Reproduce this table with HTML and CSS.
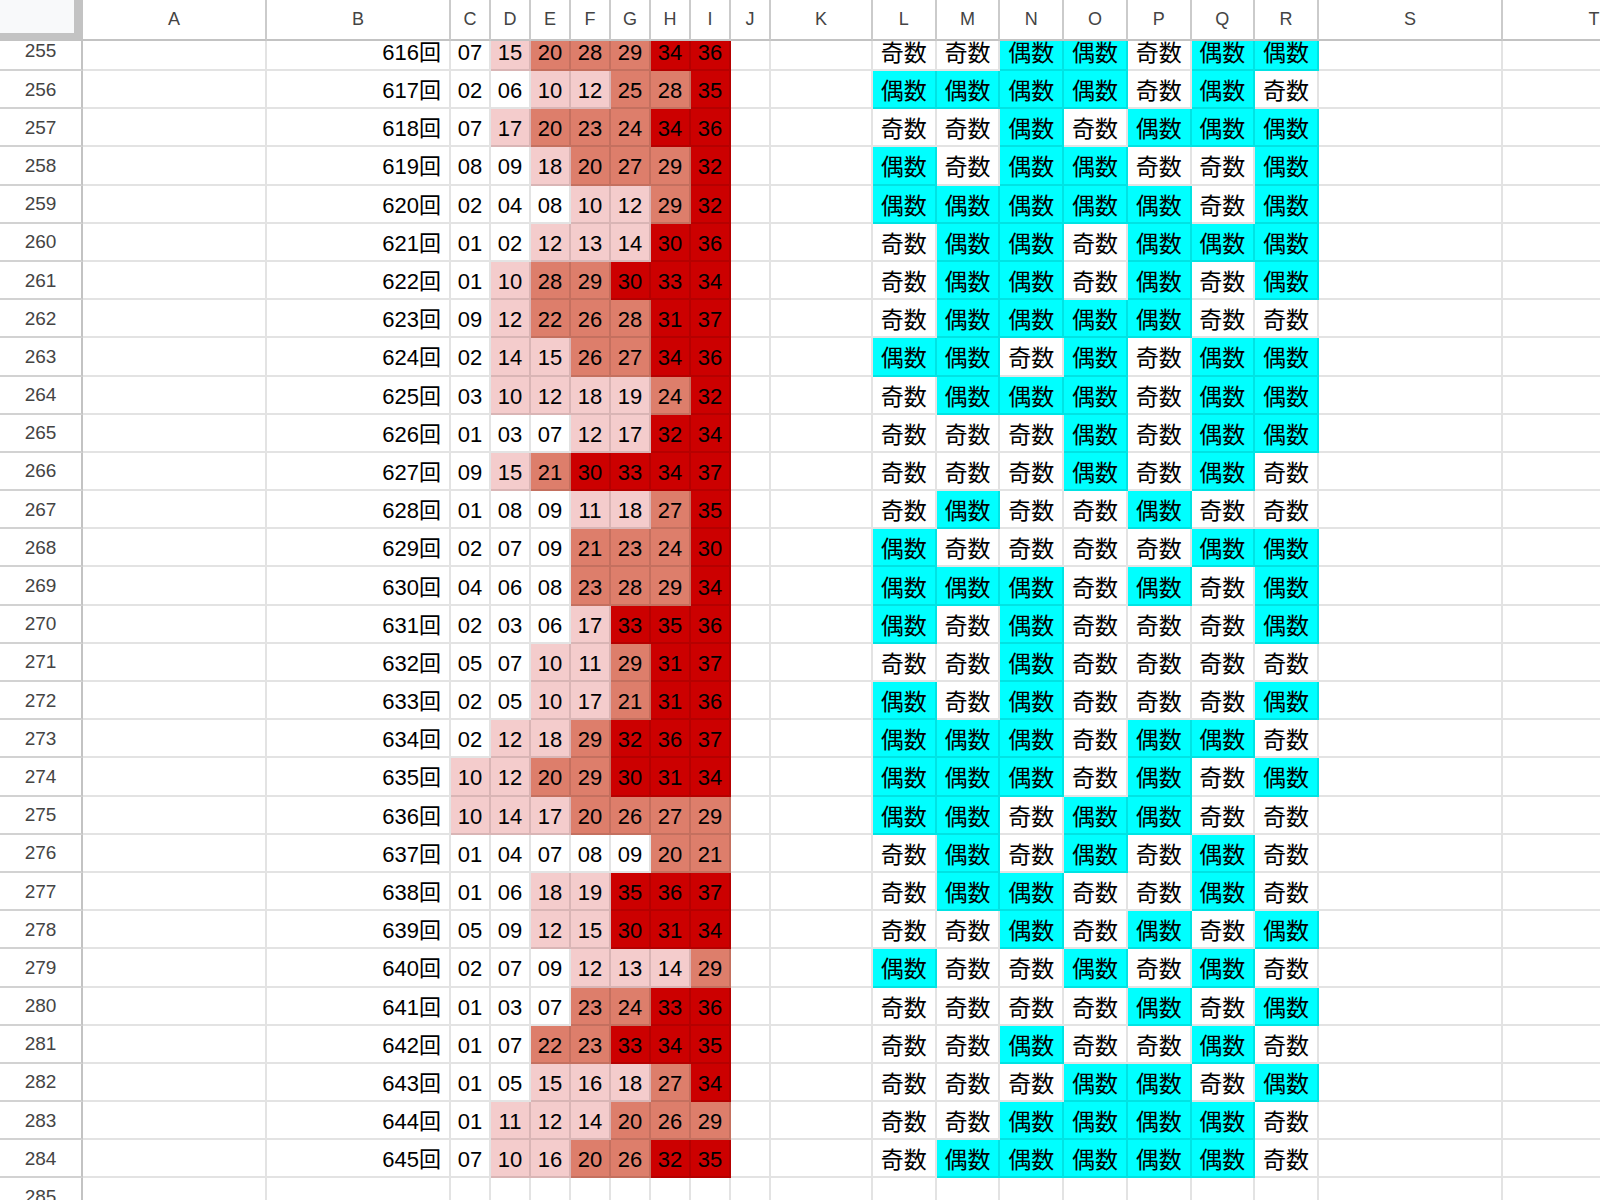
FILE: index.html
```html
<!DOCTYPE html>
<html lang="ja">
<head>
<meta charset="utf-8">
<title>Sheet</title>
<link rel="stylesheet" href="styles.css">
</head>
<body>
<div class="sheet">
  <div class="cols head">
    <div class="corner"></div>
    <div class="hc">A</div><div class="hc">B</div><div class="hc">C</div><div class="hc">D</div><div class="hc">E</div><div class="hc">F</div><div class="hc">G</div><div class="hc">H</div><div class="hc">I</div><div class="hc">J</div><div class="hc">K</div><div class="hc">L</div><div class="hc">M</div><div class="hc">N</div><div class="hc">O</div><div class="hc">P</div><div class="hc">Q</div><div class="hc">R</div><div class="hc">S</div><div class="hc">T</div>
  </div>
  <div class="viewport">
    <div class="rows">
      <div class="cols row"><div class="rh">255</div><div class="c"></div><div class="c no">616回</div><div class="c b0">07</div><div class="c b1">15</div><div class="c b2">20</div><div class="c b2">28</div><div class="c b2">29</div><div class="c b3">34</div><div class="c b3">36</div><div class="c"></div><div class="c"></div><div class="c od">奇数</div><div class="c od">奇数</div><div class="c ev">偶数</div><div class="c ev">偶数</div><div class="c od">奇数</div><div class="c ev">偶数</div><div class="c ev">偶数</div><div class="c"></div><div class="c"></div></div>
      <div class="cols row"><div class="rh">256</div><div class="c"></div><div class="c no">617回</div><div class="c b0">02</div><div class="c b0">06</div><div class="c b1">10</div><div class="c b1">12</div><div class="c b2">25</div><div class="c b2">28</div><div class="c b3">35</div><div class="c"></div><div class="c"></div><div class="c ev">偶数</div><div class="c ev">偶数</div><div class="c ev">偶数</div><div class="c ev">偶数</div><div class="c od">奇数</div><div class="c ev">偶数</div><div class="c od">奇数</div><div class="c"></div><div class="c"></div></div>
      <div class="cols row"><div class="rh">257</div><div class="c"></div><div class="c no">618回</div><div class="c b0">07</div><div class="c b1">17</div><div class="c b2">20</div><div class="c b2">23</div><div class="c b2">24</div><div class="c b3">34</div><div class="c b3">36</div><div class="c"></div><div class="c"></div><div class="c od">奇数</div><div class="c od">奇数</div><div class="c ev">偶数</div><div class="c od">奇数</div><div class="c ev">偶数</div><div class="c ev">偶数</div><div class="c ev">偶数</div><div class="c"></div><div class="c"></div></div>
      <div class="cols row"><div class="rh">258</div><div class="c"></div><div class="c no">619回</div><div class="c b0">08</div><div class="c b0">09</div><div class="c b1">18</div><div class="c b2">20</div><div class="c b2">27</div><div class="c b2">29</div><div class="c b3">32</div><div class="c"></div><div class="c"></div><div class="c ev">偶数</div><div class="c od">奇数</div><div class="c ev">偶数</div><div class="c ev">偶数</div><div class="c od">奇数</div><div class="c od">奇数</div><div class="c ev">偶数</div><div class="c"></div><div class="c"></div></div>
      <div class="cols row"><div class="rh">259</div><div class="c"></div><div class="c no">620回</div><div class="c b0">02</div><div class="c b0">04</div><div class="c b0">08</div><div class="c b1">10</div><div class="c b1">12</div><div class="c b2">29</div><div class="c b3">32</div><div class="c"></div><div class="c"></div><div class="c ev">偶数</div><div class="c ev">偶数</div><div class="c ev">偶数</div><div class="c ev">偶数</div><div class="c ev">偶数</div><div class="c od">奇数</div><div class="c ev">偶数</div><div class="c"></div><div class="c"></div></div>
      <div class="cols row"><div class="rh">260</div><div class="c"></div><div class="c no">621回</div><div class="c b0">01</div><div class="c b0">02</div><div class="c b1">12</div><div class="c b1">13</div><div class="c b1">14</div><div class="c b3">30</div><div class="c b3">36</div><div class="c"></div><div class="c"></div><div class="c od">奇数</div><div class="c ev">偶数</div><div class="c ev">偶数</div><div class="c od">奇数</div><div class="c ev">偶数</div><div class="c ev">偶数</div><div class="c ev">偶数</div><div class="c"></div><div class="c"></div></div>
      <div class="cols row"><div class="rh">261</div><div class="c"></div><div class="c no">622回</div><div class="c b0">01</div><div class="c b1">10</div><div class="c b2">28</div><div class="c b2">29</div><div class="c b3">30</div><div class="c b3">33</div><div class="c b3">34</div><div class="c"></div><div class="c"></div><div class="c od">奇数</div><div class="c ev">偶数</div><div class="c ev">偶数</div><div class="c od">奇数</div><div class="c ev">偶数</div><div class="c od">奇数</div><div class="c ev">偶数</div><div class="c"></div><div class="c"></div></div>
      <div class="cols row"><div class="rh">262</div><div class="c"></div><div class="c no">623回</div><div class="c b0">09</div><div class="c b1">12</div><div class="c b2">22</div><div class="c b2">26</div><div class="c b2">28</div><div class="c b3">31</div><div class="c b3">37</div><div class="c"></div><div class="c"></div><div class="c od">奇数</div><div class="c ev">偶数</div><div class="c ev">偶数</div><div class="c ev">偶数</div><div class="c ev">偶数</div><div class="c od">奇数</div><div class="c od">奇数</div><div class="c"></div><div class="c"></div></div>
      <div class="cols row"><div class="rh">263</div><div class="c"></div><div class="c no">624回</div><div class="c b0">02</div><div class="c b1">14</div><div class="c b1">15</div><div class="c b2">26</div><div class="c b2">27</div><div class="c b3">34</div><div class="c b3">36</div><div class="c"></div><div class="c"></div><div class="c ev">偶数</div><div class="c ev">偶数</div><div class="c od">奇数</div><div class="c ev">偶数</div><div class="c od">奇数</div><div class="c ev">偶数</div><div class="c ev">偶数</div><div class="c"></div><div class="c"></div></div>
      <div class="cols row"><div class="rh">264</div><div class="c"></div><div class="c no">625回</div><div class="c b0">03</div><div class="c b1">10</div><div class="c b1">12</div><div class="c b1">18</div><div class="c b1">19</div><div class="c b2">24</div><div class="c b3">32</div><div class="c"></div><div class="c"></div><div class="c od">奇数</div><div class="c ev">偶数</div><div class="c ev">偶数</div><div class="c ev">偶数</div><div class="c od">奇数</div><div class="c ev">偶数</div><div class="c ev">偶数</div><div class="c"></div><div class="c"></div></div>
      <div class="cols row"><div class="rh">265</div><div class="c"></div><div class="c no">626回</div><div class="c b0">01</div><div class="c b0">03</div><div class="c b0">07</div><div class="c b1">12</div><div class="c b1">17</div><div class="c b3">32</div><div class="c b3">34</div><div class="c"></div><div class="c"></div><div class="c od">奇数</div><div class="c od">奇数</div><div class="c od">奇数</div><div class="c ev">偶数</div><div class="c od">奇数</div><div class="c ev">偶数</div><div class="c ev">偶数</div><div class="c"></div><div class="c"></div></div>
      <div class="cols row"><div class="rh">266</div><div class="c"></div><div class="c no">627回</div><div class="c b0">09</div><div class="c b1">15</div><div class="c b2">21</div><div class="c b3">30</div><div class="c b3">33</div><div class="c b3">34</div><div class="c b3">37</div><div class="c"></div><div class="c"></div><div class="c od">奇数</div><div class="c od">奇数</div><div class="c od">奇数</div><div class="c ev">偶数</div><div class="c od">奇数</div><div class="c ev">偶数</div><div class="c od">奇数</div><div class="c"></div><div class="c"></div></div>
      <div class="cols row"><div class="rh">267</div><div class="c"></div><div class="c no">628回</div><div class="c b0">01</div><div class="c b0">08</div><div class="c b0">09</div><div class="c b1">11</div><div class="c b1">18</div><div class="c b2">27</div><div class="c b3">35</div><div class="c"></div><div class="c"></div><div class="c od">奇数</div><div class="c ev">偶数</div><div class="c od">奇数</div><div class="c od">奇数</div><div class="c ev">偶数</div><div class="c od">奇数</div><div class="c od">奇数</div><div class="c"></div><div class="c"></div></div>
      <div class="cols row"><div class="rh">268</div><div class="c"></div><div class="c no">629回</div><div class="c b0">02</div><div class="c b0">07</div><div class="c b0">09</div><div class="c b2">21</div><div class="c b2">23</div><div class="c b2">24</div><div class="c b3">30</div><div class="c"></div><div class="c"></div><div class="c ev">偶数</div><div class="c od">奇数</div><div class="c od">奇数</div><div class="c od">奇数</div><div class="c od">奇数</div><div class="c ev">偶数</div><div class="c ev">偶数</div><div class="c"></div><div class="c"></div></div>
      <div class="cols row"><div class="rh">269</div><div class="c"></div><div class="c no">630回</div><div class="c b0">04</div><div class="c b0">06</div><div class="c b0">08</div><div class="c b2">23</div><div class="c b2">28</div><div class="c b2">29</div><div class="c b3">34</div><div class="c"></div><div class="c"></div><div class="c ev">偶数</div><div class="c ev">偶数</div><div class="c ev">偶数</div><div class="c od">奇数</div><div class="c ev">偶数</div><div class="c od">奇数</div><div class="c ev">偶数</div><div class="c"></div><div class="c"></div></div>
      <div class="cols row"><div class="rh">270</div><div class="c"></div><div class="c no">631回</div><div class="c b0">02</div><div class="c b0">03</div><div class="c b0">06</div><div class="c b1">17</div><div class="c b3">33</div><div class="c b3">35</div><div class="c b3">36</div><div class="c"></div><div class="c"></div><div class="c ev">偶数</div><div class="c od">奇数</div><div class="c ev">偶数</div><div class="c od">奇数</div><div class="c od">奇数</div><div class="c od">奇数</div><div class="c ev">偶数</div><div class="c"></div><div class="c"></div></div>
      <div class="cols row"><div class="rh">271</div><div class="c"></div><div class="c no">632回</div><div class="c b0">05</div><div class="c b0">07</div><div class="c b1">10</div><div class="c b1">11</div><div class="c b2">29</div><div class="c b3">31</div><div class="c b3">37</div><div class="c"></div><div class="c"></div><div class="c od">奇数</div><div class="c od">奇数</div><div class="c ev">偶数</div><div class="c od">奇数</div><div class="c od">奇数</div><div class="c od">奇数</div><div class="c od">奇数</div><div class="c"></div><div class="c"></div></div>
      <div class="cols row"><div class="rh">272</div><div class="c"></div><div class="c no">633回</div><div class="c b0">02</div><div class="c b0">05</div><div class="c b1">10</div><div class="c b1">17</div><div class="c b2">21</div><div class="c b3">31</div><div class="c b3">36</div><div class="c"></div><div class="c"></div><div class="c ev">偶数</div><div class="c od">奇数</div><div class="c ev">偶数</div><div class="c od">奇数</div><div class="c od">奇数</div><div class="c od">奇数</div><div class="c ev">偶数</div><div class="c"></div><div class="c"></div></div>
      <div class="cols row"><div class="rh">273</div><div class="c"></div><div class="c no">634回</div><div class="c b0">02</div><div class="c b1">12</div><div class="c b1">18</div><div class="c b2">29</div><div class="c b3">32</div><div class="c b3">36</div><div class="c b3">37</div><div class="c"></div><div class="c"></div><div class="c ev">偶数</div><div class="c ev">偶数</div><div class="c ev">偶数</div><div class="c od">奇数</div><div class="c ev">偶数</div><div class="c ev">偶数</div><div class="c od">奇数</div><div class="c"></div><div class="c"></div></div>
      <div class="cols row"><div class="rh">274</div><div class="c"></div><div class="c no">635回</div><div class="c b1">10</div><div class="c b1">12</div><div class="c b2">20</div><div class="c b2">29</div><div class="c b3">30</div><div class="c b3">31</div><div class="c b3">34</div><div class="c"></div><div class="c"></div><div class="c ev">偶数</div><div class="c ev">偶数</div><div class="c ev">偶数</div><div class="c od">奇数</div><div class="c ev">偶数</div><div class="c od">奇数</div><div class="c ev">偶数</div><div class="c"></div><div class="c"></div></div>
      <div class="cols row"><div class="rh">275</div><div class="c"></div><div class="c no">636回</div><div class="c b1">10</div><div class="c b1">14</div><div class="c b1">17</div><div class="c b2">20</div><div class="c b2">26</div><div class="c b2">27</div><div class="c b2">29</div><div class="c"></div><div class="c"></div><div class="c ev">偶数</div><div class="c ev">偶数</div><div class="c od">奇数</div><div class="c ev">偶数</div><div class="c ev">偶数</div><div class="c od">奇数</div><div class="c od">奇数</div><div class="c"></div><div class="c"></div></div>
      <div class="cols row"><div class="rh">276</div><div class="c"></div><div class="c no">637回</div><div class="c b0">01</div><div class="c b0">04</div><div class="c b0">07</div><div class="c b0">08</div><div class="c b0">09</div><div class="c b2">20</div><div class="c b2">21</div><div class="c"></div><div class="c"></div><div class="c od">奇数</div><div class="c ev">偶数</div><div class="c od">奇数</div><div class="c ev">偶数</div><div class="c od">奇数</div><div class="c ev">偶数</div><div class="c od">奇数</div><div class="c"></div><div class="c"></div></div>
      <div class="cols row"><div class="rh">277</div><div class="c"></div><div class="c no">638回</div><div class="c b0">01</div><div class="c b0">06</div><div class="c b1">18</div><div class="c b1">19</div><div class="c b3">35</div><div class="c b3">36</div><div class="c b3">37</div><div class="c"></div><div class="c"></div><div class="c od">奇数</div><div class="c ev">偶数</div><div class="c ev">偶数</div><div class="c od">奇数</div><div class="c od">奇数</div><div class="c ev">偶数</div><div class="c od">奇数</div><div class="c"></div><div class="c"></div></div>
      <div class="cols row"><div class="rh">278</div><div class="c"></div><div class="c no">639回</div><div class="c b0">05</div><div class="c b0">09</div><div class="c b1">12</div><div class="c b1">15</div><div class="c b3">30</div><div class="c b3">31</div><div class="c b3">34</div><div class="c"></div><div class="c"></div><div class="c od">奇数</div><div class="c od">奇数</div><div class="c ev">偶数</div><div class="c od">奇数</div><div class="c ev">偶数</div><div class="c od">奇数</div><div class="c ev">偶数</div><div class="c"></div><div class="c"></div></div>
      <div class="cols row"><div class="rh">279</div><div class="c"></div><div class="c no">640回</div><div class="c b0">02</div><div class="c b0">07</div><div class="c b0">09</div><div class="c b1">12</div><div class="c b1">13</div><div class="c b1">14</div><div class="c b2">29</div><div class="c"></div><div class="c"></div><div class="c ev">偶数</div><div class="c od">奇数</div><div class="c od">奇数</div><div class="c ev">偶数</div><div class="c od">奇数</div><div class="c ev">偶数</div><div class="c od">奇数</div><div class="c"></div><div class="c"></div></div>
      <div class="cols row"><div class="rh">280</div><div class="c"></div><div class="c no">641回</div><div class="c b0">01</div><div class="c b0">03</div><div class="c b0">07</div><div class="c b2">23</div><div class="c b2">24</div><div class="c b3">33</div><div class="c b3">36</div><div class="c"></div><div class="c"></div><div class="c od">奇数</div><div class="c od">奇数</div><div class="c od">奇数</div><div class="c od">奇数</div><div class="c ev">偶数</div><div class="c od">奇数</div><div class="c ev">偶数</div><div class="c"></div><div class="c"></div></div>
      <div class="cols row"><div class="rh">281</div><div class="c"></div><div class="c no">642回</div><div class="c b0">01</div><div class="c b0">07</div><div class="c b2">22</div><div class="c b2">23</div><div class="c b3">33</div><div class="c b3">34</div><div class="c b3">35</div><div class="c"></div><div class="c"></div><div class="c od">奇数</div><div class="c od">奇数</div><div class="c ev">偶数</div><div class="c od">奇数</div><div class="c od">奇数</div><div class="c ev">偶数</div><div class="c od">奇数</div><div class="c"></div><div class="c"></div></div>
      <div class="cols row"><div class="rh">282</div><div class="c"></div><div class="c no">643回</div><div class="c b0">01</div><div class="c b0">05</div><div class="c b1">15</div><div class="c b1">16</div><div class="c b1">18</div><div class="c b2">27</div><div class="c b3">34</div><div class="c"></div><div class="c"></div><div class="c od">奇数</div><div class="c od">奇数</div><div class="c od">奇数</div><div class="c ev">偶数</div><div class="c ev">偶数</div><div class="c od">奇数</div><div class="c ev">偶数</div><div class="c"></div><div class="c"></div></div>
      <div class="cols row"><div class="rh">283</div><div class="c"></div><div class="c no">644回</div><div class="c b0">01</div><div class="c b1">11</div><div class="c b1">12</div><div class="c b1">14</div><div class="c b2">20</div><div class="c b2">26</div><div class="c b2">29</div><div class="c"></div><div class="c"></div><div class="c od">奇数</div><div class="c od">奇数</div><div class="c ev">偶数</div><div class="c ev">偶数</div><div class="c ev">偶数</div><div class="c ev">偶数</div><div class="c od">奇数</div><div class="c"></div><div class="c"></div></div>
      <div class="cols row"><div class="rh">284</div><div class="c"></div><div class="c no">645回</div><div class="c b0">07</div><div class="c b1">10</div><div class="c b1">16</div><div class="c b2">20</div><div class="c b2">26</div><div class="c b3">32</div><div class="c b3">35</div><div class="c"></div><div class="c"></div><div class="c od">奇数</div><div class="c ev">偶数</div><div class="c ev">偶数</div><div class="c ev">偶数</div><div class="c ev">偶数</div><div class="c ev">偶数</div><div class="c od">奇数</div><div class="c"></div><div class="c"></div></div>
      <div class="cols row"><div class="rh">285</div><div class="c"></div><div class="c"></div><div class="c"></div><div class="c"></div><div class="c"></div><div class="c"></div><div class="c"></div><div class="c"></div><div class="c"></div><div class="c"></div><div class="c"></div><div class="c"></div><div class="c"></div><div class="c"></div><div class="c"></div><div class="c"></div><div class="c"></div><div class="c"></div><div class="c"></div><div class="c"></div></div>
    </div>
  </div>
</div>
</body>
</html>
```
FILE: styles.css
```css
* { box-sizing: border-box; }
html, body { margin: 0; padding: 0; background: #fff; overflow: hidden; }
body {
  width: 1600px;
  height: 1200px;
  font-family: "Liberation Sans", Arial, "Noto Sans CJK JP", sans-serif;
}
.sheet { width: 1687px; }
.cols {
  display: grid;
  grid-template-columns: 83px 184px 184px repeat(8, 40px) 102px repeat(7, 63.714px) 184px 184px;
}
.head { height: 41px; }
.corner {
  background: #f8f9fa;
  border-right: 9px solid #c3c3c3;
  border-bottom: 8px solid #c3c3c3;
}
.hc {
  display: flex;
  align-items: center;
  justify-content: center;
  border-right: 2px solid #cbcbcb;
  border-bottom: 2px solid #c3c3c3;
  font-size: 18px;
  color: #444;
  background: #fff;
}
.viewport { height: 1159px; overflow: hidden; }
.rows { margin-top: -8.2px; }
.row { height: 38.2px; }
.rh {
  display: flex;
  align-items: center;
  justify-content: center;
  border-right: 2px solid #c3c3c3;
  border-bottom: 2px solid #d2d2d2;
  font-size: 19px;
  line-height: 19px;
  color: #444;
  background: #fff;
}
.c {
  display: flex;
  align-items: center;
  justify-content: center;
  padding-top: 4px;
  border-right: 2px solid rgba(0, 0, 0, 0.11);
  border-bottom: 2px solid rgba(0, 0, 0, 0.11);
  font-size: 22px;
  line-height: 22px;
  color: #000;
  white-space: nowrap;
  overflow: hidden;
}
.no { justify-content: flex-end; padding-right: 8px; }
.b0 { background: #fff; }
.b1 { background: #f4cccc; }
.b2 { background: #dd7e6b; }
.b3 { background: #cc0000; }
.ev { background: #00ffff; font-size: 23px; }
.od { background: #fff; font-size: 23px; }
```
